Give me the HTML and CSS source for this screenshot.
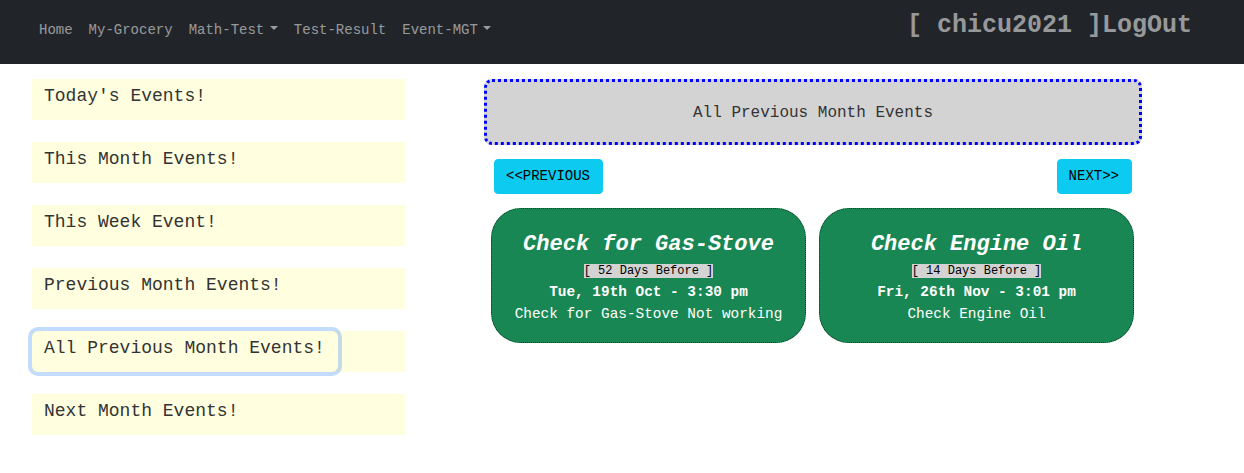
FILE: index.html
```html
<!DOCTYPE html>
<html lang="en">
<head>
<meta charset="utf-8">
<title>Event-MGT</title>
<link rel="stylesheet" href="styles.css">
</head>
<body>
<nav class="navbar">
  <ul class="nav-links">
    <li><a href="#">Home</a></li>
    <li><a href="#">My-Grocery</a></li>
    <li><a href="#" class="dropdown">Math-Test</a></li>
    <li><a href="#">Test-Result</a></li>
    <li><a href="#" class="dropdown">Event-MGT</a></li>
  </ul>
  <div class="user">[ chicu2021 ]LogOut</div>
</nav>
<div class="page">
  <aside class="sidebar">
    <div class="side-item"><button class="side-btn">Today's Events!</button></div>
    <div class="side-item"><button class="side-btn">This Month Events!</button></div>
    <div class="side-item"><button class="side-btn">This Week Event!</button></div>
    <div class="side-item"><button class="side-btn">Previous Month Events!</button></div>
    <div class="side-item"><button class="side-btn active">All Previous Month Events!</button></div>
    <div class="side-item"><button class="side-btn">Next Month Events!</button></div>
  </aside>
  <main class="content">
    <div class="banner">All Previous Month Events</div>
    <div class="pager">
      <button class="pager-btn">&lt;&lt;PREVIOUS</button>
      <button class="pager-btn">NEXT&gt;&gt;</button>
    </div>
    <div class="cards">
      <div class="card">
        <div class="card-title">Check for Gas-Stove</div>
        <div class="card-badge"><span>[ 52 Days Before ]</span></div>
        <div class="card-date">Tue, 19th Oct - 3:30 pm</div>
        <div class="card-desc">Check for Gas-Stove Not working</div>
      </div>
      <div class="card">
        <div class="card-title">Check Engine Oil</div>
        <div class="card-badge"><span>[ 14 Days Before ]</span></div>
        <div class="card-date">Fri, 26th Nov - 3:01 pm</div>
        <div class="card-desc">Check Engine Oil</div>
      </div>
    </div>
  </main>
</div>
</body>
</html>
```
FILE: styles.css
```css
* { box-sizing: border-box; }

body {
  margin: 0;
  font-family: "Liberation Mono", "Courier New", monospace;
  color: #212529;
  background: #fff;
}

.navbar {
  height: 64px;
  background: #212529;
  display: flex;
  justify-content: space-between;
  align-items: flex-start;
  padding: 0 52px 0 31px;
}

.nav-links {
  list-style: none;
  margin: 0;
  padding: 20px 0 0;
  display: flex;
}

.nav-links a {
  display: block;
  padding: 0 8px;
  font-size: 14px;
  line-height: 21px;
  color: rgba(255, 255, 255, 0.55);
  text-decoration: none;
}

.nav-links a.dropdown::after {
  content: "";
  display: inline-block;
  margin-left: 0.4em;
  vertical-align: 0.255em;
  border-top: 0.3em solid;
  border-right: 0.3em solid transparent;
  border-bottom: 0;
  border-left: 0.3em solid transparent;
}

.user {
  padding-top: 11px;
  font-size: 25px;
  line-height: 30px;
  font-weight: bold;
  color: rgba(255, 255, 255, 0.55);
}

.page {
  display: flex;
  align-items: flex-start;
  padding: 15px 0 0 32px;
}

.sidebar {
  width: 373px;
  display: flex;
  flex-direction: column;
  gap: 22px;
}

.side-item {
  display: flex;
  background: #ffffe0;
  height: 41px;
}

.side-btn {
  font-family: inherit;
  font-size: 18px;
  line-height: 27px;
  padding: 3px 12px 9px 11px;
  border: 1px solid transparent;
  border-radius: 6px;
  background: transparent;
  color: #333;
  text-align: left;
  cursor: pointer;
}

.side-btn.active {
  box-shadow: 0 0 0 4px rgba(13, 110, 253, 0.25);
}

.content {
  width: 658px;
  margin-left: 79px;
}

.banner {
  height: 66px;
  border: 3px dotted #0000ff;
  border-radius: 8px;
  background: #d3d3d3;
  display: flex;
  align-items: center;
  justify-content: center;
  padding-top: 1px;
  font-size: 16px;
  color: #333;
}

.pager {
  margin-top: 14px;
  padding: 0 10px;
  display: flex;
  justify-content: space-between;
}

.pager-btn {
  font-family: inherit;
  font-size: 14px;
  line-height: 21px;
  padding: 6px 12px 6px 11px;
  border: 1px solid #0dcaf0;
  border-radius: 4px;
  background: #0dcaf0;
  color: #000;
}

.cards {
  margin-top: 14px;
  margin-left: 7px;
  display: flex;
  gap: 13px;
}

.card {
  width: 315px;
  height: 135px;
  border: 1px dotted #0b3a22;
  border-radius: 30px;
  background: #198754;
  color: #fff;
  text-align: center;
  padding-top: 23px;
}

.card-title {
  font-size: 22px;
  line-height: 26px;
  font-weight: bold;
  font-style: italic;
  margin-bottom: 6px;
}

.card-badge {
  font-size: 12px;
  line-height: normal;
}

.card-badge span {
  background: #d3d3d3;
  color: #000;
}

.card-date {
  margin-top: 4px;
  font-size: 14.4px;
  line-height: 1.5;
  font-weight: bold;
}

.card-desc {
  font-size: 14.4px;
  line-height: 1.5;
}
```
